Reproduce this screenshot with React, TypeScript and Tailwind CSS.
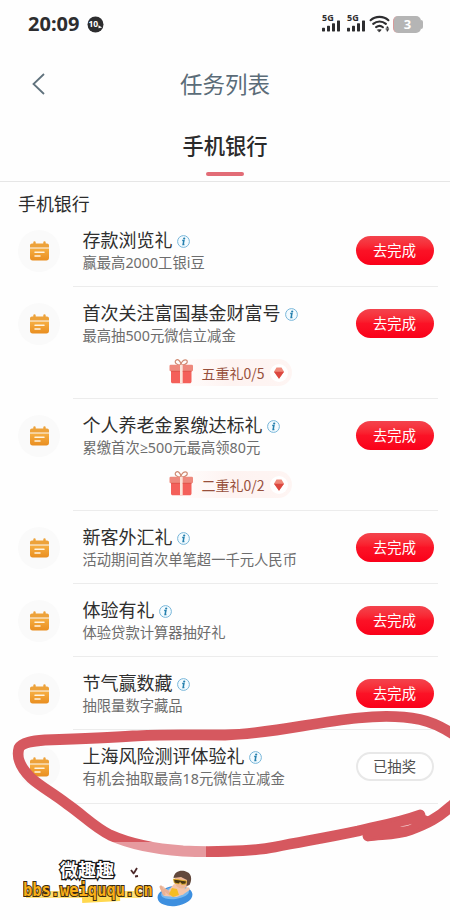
import React from "react";

type Task = {
  title: string;
  desc: string;
  height: string;
  gift?: string;
  done?: boolean;
};

const tasks: Task[] = [
  { title: "存款浏览礼", desc: "赢最高2000工银i豆", height: "h-[73px]" },
  { title: "首次关注富国基金财富号", desc: "最高抽500元微信立减金", height: "h-[112px]", gift: "五重礼0/5" },
  { title: "个人养老金累缴达标礼", desc: "累缴首次≥500元最高领80元", height: "h-[112px]", gift: "二重礼0/2" },
  { title: "新客外汇礼", desc: "活动期间首次单笔超一千元人民币", height: "h-[73px]" },
  { title: "体验有礼", desc: "体验贷款计算器抽好礼", height: "h-[73px]" },
  { title: "节气赢数藏", desc: "抽限量数字藏品", height: "h-[73px]" },
  { title: "上海风险测评体验礼", desc: "有机会抽取最高18元微信立减金", height: "h-[74px]", done: true },
];

const Signal = () => (
  <svg className="overflow-visible" width="20" height="22" viewBox="0 0 20 22" fill="#2d2d2f">
    <text x="0" y="8.4" fontSize="9" fontWeight="700" fontFamily="Open Sans, sans-serif">
      5G
    </text>
    <rect x="0" y="14.8" width="3" height="3.6" rx=".6" />
    <rect x="5" y="12.8" width="3" height="5.6" rx=".6" />
    <rect x="10" y="10.2" width="3" height="8.2" rx=".6" />
    <rect x="15" y="7.4" width="3" height="11" rx=".6" />
  </svg>
);

const StatusBar = () => (
  <div className="flex h-12 items-center pl-7 pr-[27px] text-[#2d2d2f]">
    <span className="w-[53px] font-['Noto_Sans'] text-[20px] font-bold leading-none">20:09</span>
    <svg className="ml-[6px]" width="17" height="17" viewBox="0 0 17 17">
      <circle cx="8.5" cy="8.5" r="8" fill="#2d2d2f" />
      <text x="1.5" y="11.4" fontSize="8.5" fontWeight="700" fill="#fff" fontFamily="Open Sans, sans-serif">
        10
      </text>
      <path d="M11.5 9.3l3.6 2.3-3.6.6z" fill="#fff" />
    </svg>
    <div className="ml-auto flex items-center">
      <Signal />
      <span className="w-[5px]" />
      <Signal />
      <svg className="ml-[2px]" width="22" height="18" viewBox="0 0 22 18" fill="none" stroke="#2d2d2f" strokeLinecap="round">
        <path d="M1.6 5.2C6.4.8 14.6.8 19.4 5.2" strokeWidth="2.1" />
        <path d="M4.2 8.9c3.7-3.2 9-3.2 12.7 0" strokeWidth="2.1" />
        <path d="M7.1 12.2c2.2-1.7 4.8-1.7 6.8 0" strokeWidth="2.1" />
        <path d="M8.8 14.8h3.4L10.5 16.8z" fill="#2d2d2f" strokeWidth=".8" />
        <path d="M18.5 11.3l1.4 2.2h-2.8zM18.5 16.5l1.4-2.2h-2.8z" fill="#2d2d2f" strokeWidth=".3" />
      </svg>
      <div className="ml-[2px] flex h-[17px] w-[28px] items-center justify-center rounded-[5px] border-l border-[#d99a9a] bg-[#b5b5b5] font-['Open_Sans'] text-[13px] font-bold leading-none text-white">
        3
      </div>
      <span className="h-[9px] w-[2px] rounded-r-full bg-[#b5b5b5]" />
    </div>
  </div>
);

const CalendarIcon = () => (
  <svg width="19" height="20" viewBox="0 0 19 20">
    <defs>
      <linearGradient id="cal" x1="0" y1="0" x2="0" y2="1">
        <stop offset="0" stopColor="#f6ae42" />
        <stop offset="1" stopColor="#e98e20" />
      </linearGradient>
    </defs>
    <path d="M0 6.6V4.5C0 3.2.8 2.500 2 2.500h1.300V1.400a1.200 1.200 0 0 1 2.400 0v1.100h7.600V1.400a1.200 1.200 0 0 1 2.400 0v1.100H17c1.200 0 2 .7 2 2v2.100z" fill="#eda23a" />
    <path d="M0 7.600h19v9.200c0 1.800-.9 2.700-2.700 2.700H2.700C.9 19.500 0 18.600 0 16.800z" fill="url(#cal)" />
    <path d="M5 11.300h9M5 15h5" stroke="#fff4df" strokeWidth="1.5" strokeLinecap="round" />
  </svg>
);

const InfoIcon = () => (
  <svg className="mt-[5px] ml-[4px] shrink-0" width="13" height="13" viewBox="0 0 13 13">
    <circle cx="6.5" cy="6.5" r="5.9" fill="#f3fbff" stroke="#78b6d9" strokeWidth="1" />
    <circle cx="7.2" cy="3.5" r="1.1" fill="#2680ae" />
    <path d="M5.2 5.6h1.700l-.8 3.900h1.300" fill="none" stroke="#2680ae" strokeWidth="1.5" />
  </svg>
);

const GiftBadge = ({ text }: { text: string }) => (
  <div className="ml-[86px] mt-3 flex h-[27px] w-[123px] items-center rounded-full bg-gradient-to-r from-white via-[#fef3f1] to-[#fef5f3]">
    <svg className="-mt-[3px] shrink-0" width="25" height="27" viewBox="0 0 25 27">
      <path d="M12 7C7 7 5 4 7 2.300s4.500 1 5 4.200C12.500 3.300 15.800.7 17.600 2.300S17.500 7 12.500 7" fill="none" stroke="#cf8a72" strokeWidth="1.2" />
      <path d="M2 12.500h20.500v11c0 1-.8 1.800-1.800 1.800h-17c-1 0-1.700-.8-1.700-1.800z" fill="#f4605a" />
      <rect x=".5" y="6.8" width="23.5" height="6.5" rx="1.2" fill="#ee897d" />
      <path d="M11 7h2.700v18.300H11z" fill="#fbe4da" />
      <path d="M2 13.300h9M13.700 13.300h8.800" stroke="#dc4b44" strokeWidth=".8" />
    </svg>
    <span className="ml-[8px] whitespace-nowrap text-[14px] leading-5 text-[#98503c]">{text}</span>
    <span className="ml-[5px] flex size-[18px] shrink-0 items-center justify-center rounded-full bg-white">
      <svg width="10" height="12" viewBox="0 0 10 12">
        <path d="M2.500.5h5L10 4.800 5 11.800 0 4.800z" fill="#ef897a" />
        <path d="M0 4.800h10L5 11.800z" fill="#dc4840" />
      </svg>
    </span>
  </div>
);

const TaskRow = ({ task }: { task: Task }) => (
  <div className={`flex items-start pl-[18px] pr-3 ${task.height}`}>
    <div className="mt-4 flex size-[42px] shrink-0 items-center justify-center rounded-full bg-[#fafafa]">
      <CalendarIcon />
    </div>
    <div className="ml-[13px] flex h-full flex-1 items-start border-b border-[#ececec] pl-[9.5px] pr-[4.5px]">
      <div className="min-w-0 flex-1 pt-[13px]">
        <div className="flex h-6 items-center whitespace-nowrap text-[18px] leading-6 text-[#2f2f2f]">
          {task.title}
          <InfoIcon />
        </div>
        <p className="mt-px h-[22px] whitespace-nowrap font-['Noto_Sans','Open_Sans','Noto_Sans_CJK_SC',sans-serif] text-[14.3px] leading-[22px] text-[#6d6d6d]">
          {task.desc}
        </p>
        {task.gift && <GiftBadge text={task.gift} />}
      </div>
      {task.done ? (
        <button className="mt-[22px] h-[29px] w-[78px] shrink-0 rounded-full border-2 border-[#e8e8e8] bg-white text-[14.3px] leading-none text-[#505050]">
          已抽奖
        </button>
      ) : (
        <button className="mt-[22px] h-[29px] w-[78px] shrink-0 rounded-full bg-gradient-to-b from-[#f3434d] via-[#fb1226] to-[#fa0019] text-[14.3px] leading-none text-white">
          去完成
        </button>
      )}
    </div>
  </div>
);

// hand drawn marker around the last task
const Marker = () => (
  <svg className="absolute left-0 top-0" width="450" height="920" viewBox="0 0 450 920" fill="none">
    <path
      d="M420 815C398 823 378 826 358 831C325 838 305 841 275 847C250 852 205 852 183 851C155 849 130 844 110 835C94 827 83 815 67 804C53 793 41 787 31 778C17 764 17 755 19 748C22 742 33 741 45 740C75 739 105 738 133 736C160 734 190 735 225 735C270 734 310 723 358 718C385 715 403 716 420 719.5C432 722 445 729 453 734C482 752 475 787 450 807C438 818 428 823 410 830C396 835 382 834 368 836"
      stroke="#d6585f"
      strokeWidth="10.8"
      strokeLinecap="round"
      strokeLinejoin="round"
    />
    <path d="M362 828L420 814L434 820L410 834L368 838z" fill="#d6585f" stroke="#d6585f" strokeWidth="2" />
    <path d="M400 826.2C404 826 408 825.2 412 823.8C408 826.400 404 826.900 400 826.200z" fill="#fbe9e9" />
  </svg>
);

const Swimmer = () => (
  <svg width="37" height="38" viewBox="0 0 37 38">
    <ellipse cx="18" cy="26" rx="17.5" ry="10" fill="#3d8fdf" transform="rotate(-7 18 26)" />
    <ellipse cx="18" cy="23" rx="14" ry="6" fill="#77b8ee" transform="rotate(-7 18 23)" />
    <path d="M17 14l11 3-1 7-7 3-13-1-4-8 3-2 5 5z" fill="#f4c5aa" />
    <path d="M4 17l3 7M8 20l5 4" stroke="#eab195" strokeWidth="3" strokeLinecap="round" />
    <path d="M15 18l5 1 2 6-6 2-4-3z" fill="#f5bd23" />
    <circle cx="25" cy="11" r="7.5" fill="#eeb796" />
    <path d="M16.5 8C17 1 25-1 30 2c5 2 5 8 2.500 13l-3 1 .5-6-6-3z" fill="#62483c" />
    <path d="M16.5 9l13 2-.7 3-4 .4-1.500-2-2 1.500-4-1z" fill="#4a3714" stroke="#e8b22b" strokeWidth=".9" />
    <path d="M25 23l6-4" stroke="#f4c5aa" strokeWidth="3.5" strokeLinecap="round" />
  </svg>
);

const Watermark = () => (
  <div className="absolute left-[10px] top-[842px] h-[70px] w-[196px] bg-white/40">
    <div className="absolute left-[16px] top-[49px] h-[7px] w-[115px] bg-[#ffe27a]" />
    <div className="absolute left-[72px] top-[51px] h-[9px] w-[38px] -rotate-3 bg-[#ffd84f]" />
    <span className="absolute left-[50px] top-[15px] whitespace-nowrap text-[18px] font-bold leading-6 text-white [-webkit-text-stroke:2.5px_#161616] [paint-order:stroke_fill]">
      微趣趣
    </span>
    <svg className="absolute left-[120px] top-[25px]" width="10" height="12" viewBox="0 0 10 12">
      <path d="M1 3l3 4M7 1L4 6M5 9.5l3-.5" stroke="#4b2829" strokeWidth="1.8" />
    </svg>
    <span className="absolute left-[13px] top-[36px] scale-y-115 whitespace-nowrap font-['DejaVu_Sans_Mono'] text-[15.4px] font-bold leading-6 text-[#f8ae18] [-webkit-text-stroke:1.8px_#3a2b10] [paint-order:stroke_fill]">
      bbs.weiququ.cn
    </span>
    <div className="absolute left-[147px] top-[28px]">
      <Swimmer />
    </div>
  </div>
);

const App = () => {
  return (
    <div className="relative h-[920px] w-[450px] overflow-hidden bg-[#fefefe] font-['Noto_Sans_CJK_SC',sans-serif]">
      <StatusBar />
      <header className="flex h-[72px] items-center pl-[32px]">
        <svg width="13" height="22" viewBox="0 0 13 22" fill="none" stroke="#60727d" strokeWidth="1.8">
          <path d="M12 1L1.5 11 12 21" />
        </svg>
        <h1 className="-mt-[2px] ml-[135px] text-[22.5px] leading-8 text-[#5b6c78]">任务列表</h1>
      </header>
      <div className="flex h-[62px] flex-col items-center border-b border-[#e6e6e6] pt-[9px]">
        <h2 className="text-[21.3px] font-medium leading-8 text-[#2b2b2b]">手机银行</h2>
        <span className="mt-[11px] h-[4px] w-[38px] rounded-full bg-[#e26c76]" />
      </div>
      <h3 className="h-8 pl-[18px] pt-[9px] text-[17.9px] leading-6 text-[#2b2b2b]">手机银行</h3>
      {tasks.map((task) => (
        <TaskRow key={task.title} task={task} />
      ))}
      <Marker />
      <Watermark />
    </div>
  );
};

export default App;
